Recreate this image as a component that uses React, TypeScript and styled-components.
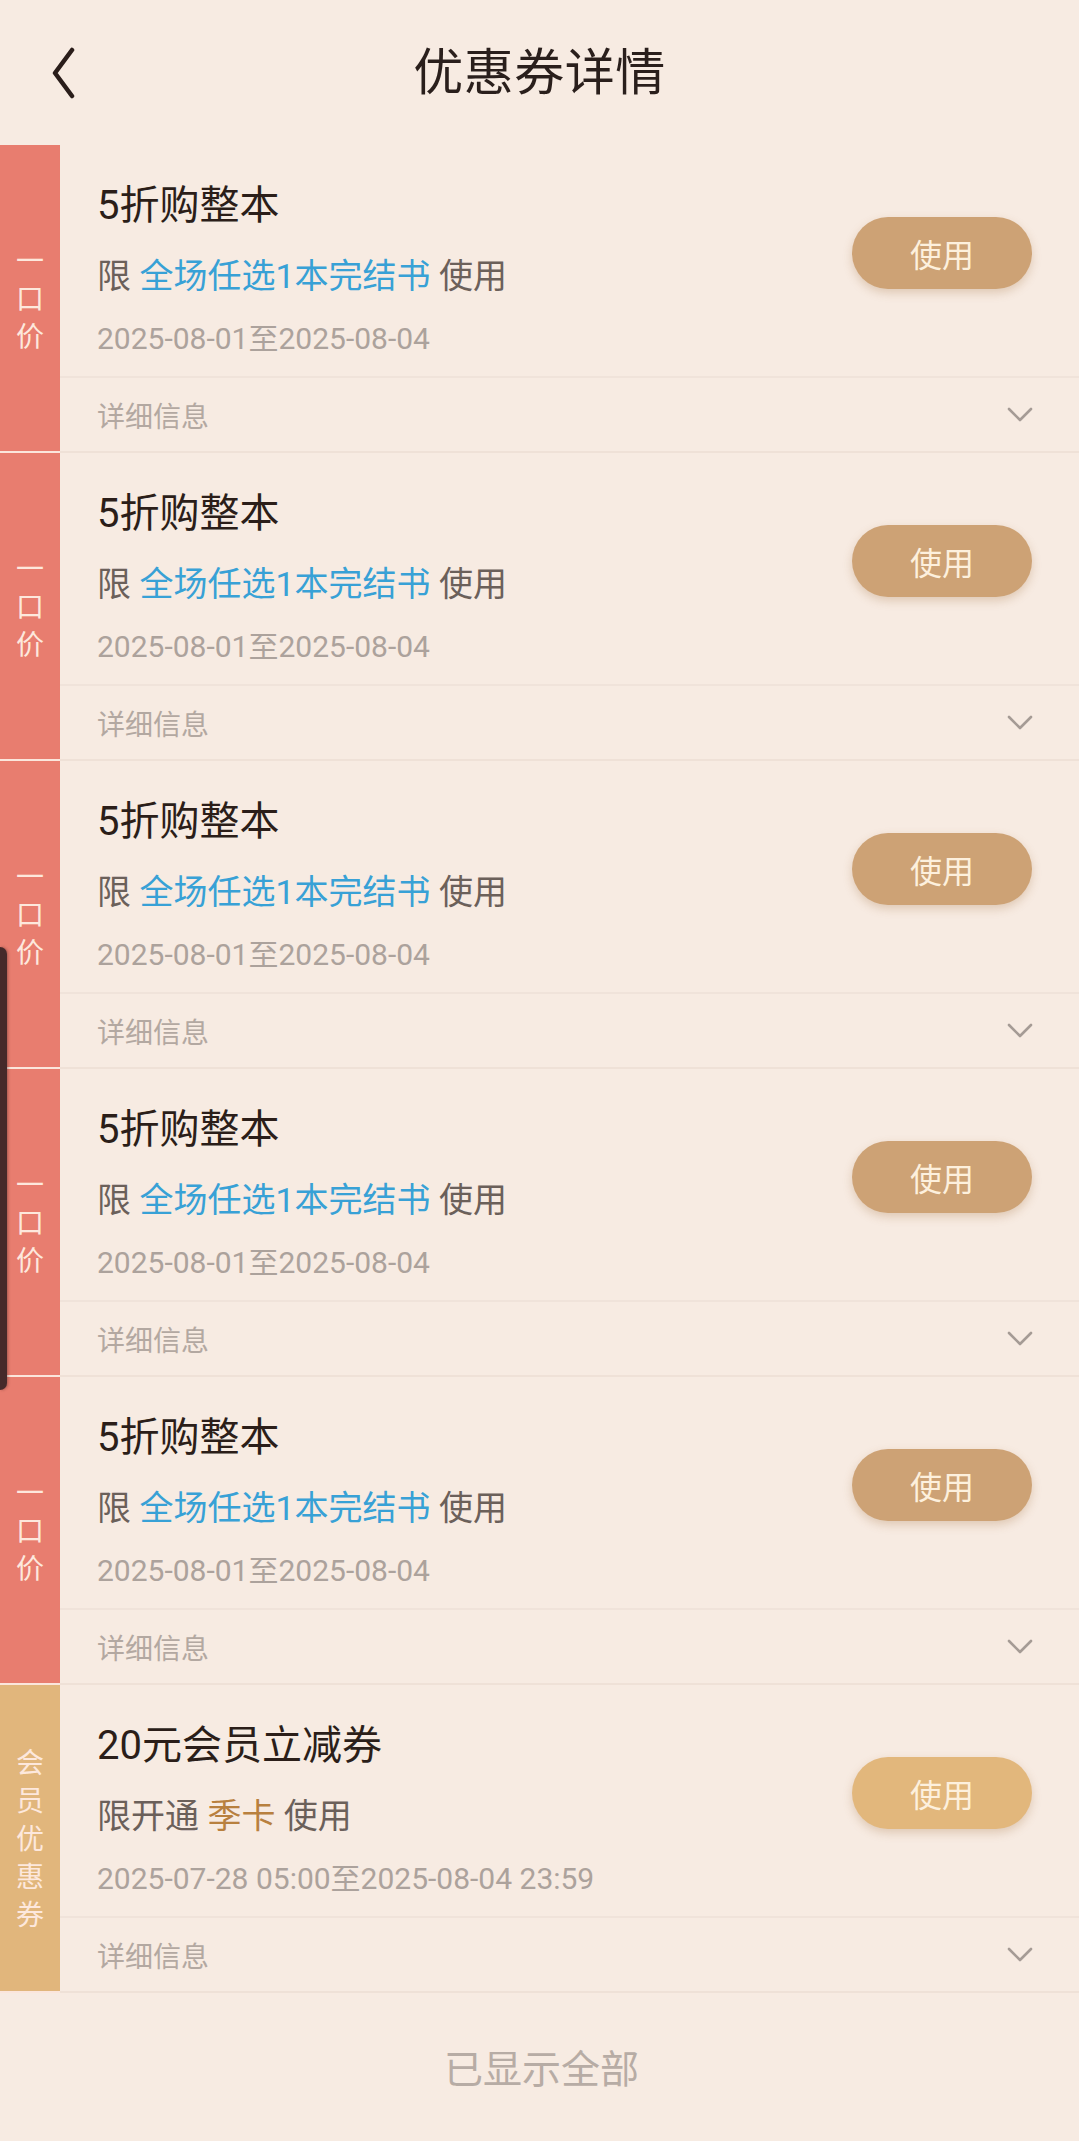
import React from "react";
import styled, { createGlobalStyle } from "styled-components";

const GlobalStyle = createGlobalStyle`
  html, body {
    margin: 0;
    padding: 0;
    background: #f7ebe2;
  }
  body {
    font-family: Roboto, "Noto Sans CJK SC", "Noto Sans", sans-serif;
    -webkit-font-smoothing: antialiased;
  }
  * { box-sizing: border-box; }
`;

const Page = styled.div`
  width: 1079px;
  min-height: 2141px;
  background: #f7ebe2;
  display: flex;
  flex-direction: column;
`;

const Header = styled.header`
  height: 145px;
  display: grid;
  grid-template-columns: 1fr auto 1fr;
  align-items: center;
  padding: 0 47px;
`;

const BackButton = styled.button`
  justify-self: start;
  width: 32px;
  height: 52px;
  border: none;
  background: none;
  padding: 0;
  display: flex;
  align-items: center;
  justify-content: center;
`;

const Title = styled.h1`
  margin: 0;
  font-size: 50px;
  font-weight: 400;
  color: #2a1f1c;
  line-height: 1;
  letter-spacing: 0.5px;
`;

const List = styled.div`
  display: flex;
  flex-direction: column;
`;

const Card = styled.div`
  display: flex;
  height: 308px;
`;

const Band = styled.div<{ $color: string }>`
  width: 60px;
  flex: none;
  background: ${(p) => p.$color};
  border-bottom: 2px solid #fbe6dc;
  display: flex;
  flex-direction: column;
  align-items: center;
  justify-content: center;
  color: #fde8dd;
  font-size: 28px;
  line-height: 38px;
  padding-top: 3px;
`;

const BandChar = styled.span`
  display: block;
`;

const Content = styled.div`
  flex: 1;
  display: flex;
  flex-direction: column;
  border-bottom: 2px solid #efe1d7;
`;

const Main = styled.div`
  height: 233px;
  display: flex;
  align-items: flex-start;
  justify-content: space-between;
  padding: 36px 47px 0 37px;
  border-bottom: 2px solid #f0e3da;
`;

const Info = styled.div`
  display: flex;
  flex-direction: column;
`;

const CouponName = styled.div`
  font-size: 40px;
  line-height: 50px;
  color: #2b1e19;
`;

const Limit = styled.div`
  margin-top: 22px;
  font-size: 34px;
  line-height: 46px;
  color: #6b605a;
  white-space: pre;
`;

const Highlight = styled.span<{ $color: string }>`
  color: ${(p) => p.$color};
`;

const Validity = styled.div`
  margin-top: 20px;
  font-size: 30px;
  line-height: 40px;
  color: #aca29c;
`;

const UseButton = styled.button<{ $color: string }>`
  margin-top: 36px;
  width: 180px;
  height: 72px;
  border: none;
  border-radius: 36px;
  background: ${(p) => p.$color};
  color: #fdf0dd;
  font-family: inherit;
  font-size: 32px;
  box-shadow: 0 4px 10px rgba(160, 110, 60, 0.28);
  flex: none;
`;

const DetailRow = styled.div`
  flex: 1;
  display: flex;
  align-items: center;
  justify-content: space-between;
  padding: 0 46px 0 37px;
  font-size: 28px;
  color: #b3a8a1;
`;

const Footer = styled.div`
  flex: 1;
  min-height: 148px;
  display: flex;
  align-items: center;
  justify-content: center;
  font-size: 39px;
  color: #b7aca5;
  padding-bottom: 2px;
  padding-left: 4px;
`;

const EdgeHandle = styled.div`
  position: absolute;
  left: 0;
  top: 947px;
  width: 7px;
  height: 443px;
  background: #45292a;
  border-radius: 0 8px 8px 0;
  box-shadow: 1px 0 3px rgba(60, 30, 30, 0.4);
`;

type Coupon = {
  band: string[];
  bandColor: string;
  name: string;
  prefix: string;
  highlight: string;
  highlightColor: string;
  validity: string;
  buttonColor: string;
};

const single: Coupon = {
  band: ["一", "口", "价"],
  bandColor: "#e87d6f",
  name: "5折购整本",
  prefix: "限 ",
  highlight: "全场任选1本完结书",
  highlightColor: "#38a1d6",
  validity: "2025-08-01至2025-08-04",
  buttonColor: "#cda275",
};

const coupons: Coupon[] = [
  single,
  single,
  single,
  single,
  single,
  {
    band: ["会", "员", "优", "惠", "券"],
    bandColor: "#e1b67c",
    name: "20元会员立减券",
    prefix: "限开通 ",
    highlight: "季卡",
    highlightColor: "#b8803f",
    validity: "2025-07-28 05:00至2025-08-04 23:59",
    buttonColor: "#e2b77c",
  },
];

const BackIcon = () => (
  <svg width="32" height="52" viewBox="0 0 32 52">
    <polyline
      points="25,3 8,26 25,49"
      fill="none"
      stroke="#2a1d1a"
      strokeWidth="4.5"
      strokeLinecap="round"
      strokeLinejoin="round"
    />
  </svg>
);

const ChevronDown = () => (
  <svg width="26" height="16" viewBox="0 0 26 16">
    <polyline
      points="2,2 13,13 24,2"
      fill="none"
      stroke="#a59b95"
      strokeWidth="2.6"
      strokeLinecap="round"
      strokeLinejoin="round"
    />
  </svg>
);

export default function App() {
  return (
    <>
      <GlobalStyle />
      <Page>
        <Header>
          <BackButton aria-label="返回">
            <BackIcon />
          </BackButton>
          <Title>优惠券详情</Title>
          <span />
        </Header>
        <List>
          {coupons.map((c, i) => (
            <Card key={i}>
              <Band $color={c.bandColor}>
                {c.band.map((ch, j) => (
                  <BandChar key={j}>{ch}</BandChar>
                ))}
              </Band>
              <Content>
                <Main>
                  <Info>
                    <CouponName>{c.name}</CouponName>
                    <Limit>
                      {c.prefix}
                      <Highlight $color={c.highlightColor}>{c.highlight}</Highlight>
                      {" 使用"}
                    </Limit>
                    <Validity>{c.validity}</Validity>
                  </Info>
                  <UseButton $color={c.buttonColor}>使用</UseButton>
                </Main>
                <DetailRow>
                  <span>详细信息</span>
                  <ChevronDown />
                </DetailRow>
              </Content>
            </Card>
          ))}
        </List>
        <Footer>已显示全部</Footer>
      </Page>
      <EdgeHandle />
    </>
  );
}
